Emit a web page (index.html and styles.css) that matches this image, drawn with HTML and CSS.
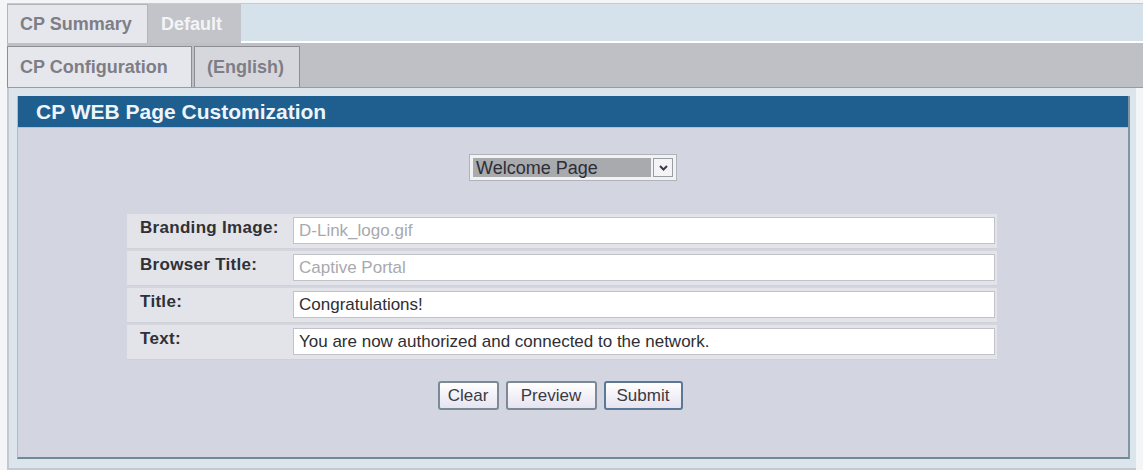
FILE: index.html
```html
<!DOCTYPE html>
<html lang="en">

<head>
    <title>CP WEB Page Customization</title>
    <link rel="stylesheet" href="styles.css">
</head>

<body>
    <div class="tabs tabs-top">
        <div class="tab">CP Summary</div>
        <div class="tab tab-dark">Default</div>
        <div class="tab-fill"></div>
    </div>
    <div class="tabs tabs-sub">
        <div class="tab tab-wide">CP Configuration</div>
        <div class="tab tab-mid">(English)</div>
        <div class="tab-fill"></div>
    </div>

    <div class="outer">
        <div class="panel">
            <div class="panel-head">CP WEB Page Customization</div>
            <div class="panel-body">
                <div class="select-row">
                    <div class="select">
                        <span class="select-value">Welcome Page</span>
                        <span class="select-arrow">
                            <svg width="9" height="6" viewBox="0 0 9 6">
                                <path d="M1 1 L4.5 4.5 L8 1" fill="none" stroke="#3a3a4a" stroke-width="2"/>
                            </svg>
                        </span>
                    </div>
                </div>

                <table class="form-table">
                    <tr>
                        <th>Branding Image:</th>
                        <td><input type="text" class="muted" value="D-Link_logo.gif"></td>
                    </tr>
                    <tr>
                        <th>Browser Title:</th>
                        <td><input type="text" class="muted" value="Captive Portal"></td>
                    </tr>
                    <tr>
                        <th>Title:</th>
                        <td><input type="text" value="Congratulations!"></td>
                    </tr>
                    <tr>
                        <th>Text:</th>
                        <td><input type="text" value="You are now authorized and connected to the network."></td>
                    </tr>
                </table>

                <div class="buttons">
                    <button class="btn btn-clear">Clear</button>
                    <button class="btn btn-wide">Preview</button>
                    <button class="btn btn-submit">Submit</button>
                </div>
            </div>
        </div>
    </div>
</body>

</html>
```

FILE: styles.css
```css
* {
    box-sizing: border-box;
    font-family: "Liberation Sans", Arial, sans-serif;
}

body {
    margin: 0;
    background-color: #f4f5f7;
    width: 1143px;
    height: 470px;
    overflow: hidden;
}

.tabs {
    display: flex;
    margin-left: 7px;
}

.tabs-top {
    margin-top: 3px;
    height: 40px;
    border-top: 1px solid #c8c9ce;
}

.tabs-sub {
    height: 45px;
    background-color: #bfc0c6;
    border-bottom: 1px solid #9a9ba2;
    padding-top: 3px;
}

.tab {
    padding: 0 12px;
    width: 141px;
    font-size: 18px;
    font-weight: bold;
    color: #7d7e86;
    background-color: #e6e7ec;
    border: 1px solid #b4b5bb;
    border-bottom: none;
    display: flex;
    align-items: center;
}

.tab-dark {
    width: 93px;
    background-color: #c3c4c9;
    color: #f4f4f6;
    border-color: #c3c4c9;
}

.tab-wide {
    width: 185px;
    border-color: #8d8e95;
}

.tab-mid {
    width: 106px;
    margin-left: 2px;
    background-color: #d6d7dc;
    border-color: #8d8e95;
}

.tabs-top .tab-fill {
    flex: 1;
    background-color: #d6e2eb;
    border-bottom: 2px solid #ffffff;
}

.tabs-sub .tab-fill {
    flex: 1;
}

.outer {
    margin-left: 7px;
    width: 1129px;
    height: 382px;
    background-color: #dce4ec;
    border-left: 2px solid #c4c8cf;
    border-bottom: 2px solid #c4c8cf;
    padding: 8px 0 0 8px;
}

.panel {
    width: 1113px;
    border-right: 2px solid #7f96a3;
    border-bottom: 2px solid #6e8c98;
    border-left: 1px solid #a9bdca;
}

.panel-head {
    height: 32px;
    background-color: #1e5f8f;
    color: #eef4fa;
    font-size: 21px;
    font-weight: bold;
    padding: 4px 0 0 18px;
    border-bottom: 1px solid #a7c6dc;
}

.panel-body {
    background-color: #d3d6e0;
    height: 329px;
    padding-top: 26px;
}

.select-row {
    display: flex;
    justify-content: center;
}

.select {
    display: flex;
    width: 208px;
    height: 27px;
    padding: 3px;
    background-color: #f2f2f4;
    border: 1px solid #b0b3ba;
}

.select-value {
    width: 180px;
    background-color: #a9aaae;
    color: #2e2e36;
    font-size: 18px;
    line-height: 20px;
    padding: 0 0 0 3px;
}

.select-arrow {
    width: 20px;
    margin-left: 2px;
    border: 1px solid #9a9ca4;
    background-color: #f4f4f6;
    display: flex;
    align-items: center;
    justify-content: center;
}

.form-table {
    margin: 31px 0 0 109px;
    width: 870px;
    border-collapse: separate;
    border-spacing: 0 2px;
}

.form-table th {
    width: 166px;
    text-align: left;
    vertical-align: top;
    background-color: #e3e4e9;
    color: #303036;
    font-size: 17px;
    letter-spacing: 0.3px;
    padding: 4px 0 8px 13px;
    border-bottom: 1px solid #d0d1d6;
}

.form-table td {
    padding: 3px 2px 4px 0;
    background-color: #e3e4e9;
    border-bottom: 1px solid #d0d1d6;
}

.form-table input {
    width: 702px;
    height: 27px;
    border: 1px solid #c2c3c8;
    background-color: #ffffff;
    color: #2e2e34;
    font-size: 17px;
    padding: 0 5px;
}

.form-table input.muted {
    color: #a8a9ae;
}

.buttons {
    display: flex;
    justify-content: center;
    gap: 7px;
    margin-top: 19px;
    padding-right: 26px;
}

.btn {
    height: 29px;
    padding: 0 6px;
    font-size: 17px;
    color: #3a3a44;
    background: linear-gradient(#ffffff, #e6e4f0);
    border: 2px solid #7c8a98;
    border-radius: 3px;
    cursor: pointer;
}

.btn-clear {
    width: 61px;
}

.btn-wide {
    width: 91px;
}

.btn-submit {
    width: 79px;
    border-color: #5b7896;
}
```
